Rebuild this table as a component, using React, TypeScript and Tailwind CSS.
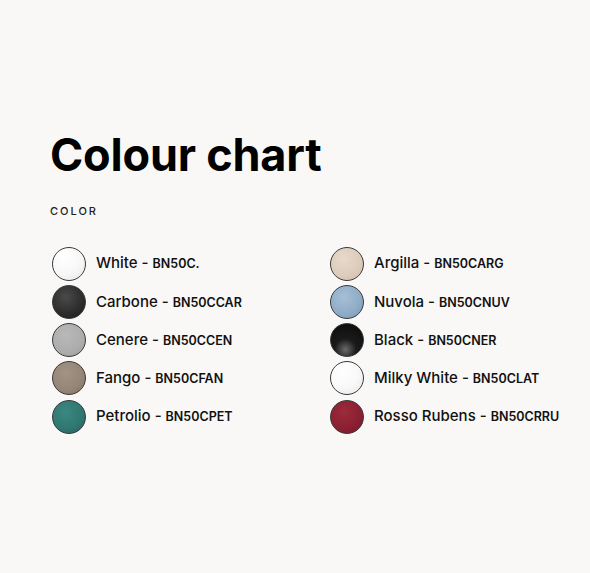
const left = [
  { name: 'White', code: 'BN50C.', fill: 'radial-gradient(circle at 35% 30%, #ffffff 0%, #f7f7f7 55%, #e6e6e6 100%)' },
  { name: 'Carbone', code: 'BN50CCAR', fill: 'radial-gradient(circle at 40% 35%, #4a4a4a 0%, #2e2e2e 55%, #1a1a1a 100%)' },
  { name: 'Cenere', code: 'BN50CCEN', fill: 'radial-gradient(circle at 40% 35%, #b9b9b9 0%, #acacac 60%, #9a9a9a 100%)' },
  { name: 'Fango', code: 'BN50CFAN', fill: 'radial-gradient(circle at 40% 35%, #a39384 0%, #958576 60%, #807061 100%)' },
  { name: 'Petrolio', code: 'BN50CPET', fill: 'radial-gradient(circle at 40% 35%, #3b8882 0%, #2f7670 60%, #225e59 100%)' },
];

const right = [
  { name: 'Argilla', code: 'BN50CARG', fill: 'radial-gradient(circle at 40% 35%, #e8d9cb 0%, #dccbbb 60%, #cdbba9 100%)' },
  { name: 'Nuvola', code: 'BN50CNUV', fill: 'radial-gradient(circle at 40% 35%, #a6bfd6 0%, #8eabc6 60%, #7394b3 100%)' },
  { name: 'Black', code: 'BN50CNER', fill: 'radial-gradient(circle at 45% 80%, #6a6a6a 0%, #1a1a1a 35%, #0a0a0a 100%)' },
  { name: 'Milky White', code: 'BN50CLAT', fill: 'radial-gradient(circle at 35% 30%, #ffffff 0%, #f8f8f8 55%, #e4e4e4 100%)' },
  { name: 'Rosso Rubens', code: 'BN50CRRU', fill: 'radial-gradient(circle at 40% 35%, #9c2a3c 0%, #8a1f31 60%, #731728 100%)' },
];

type Swatch = { name: string; code: string; fill: string };

function Row({ s }: { s: Swatch }) {
  return (
    <li className="flex h-[34px] items-center gap-[10px]">
      <span
        className="h-[34px] w-[34px] shrink-0 rounded-full border border-[#3a3a3a]"
        style={{ background: s.fill }}
      />
      <span className="whitespace-nowrap text-[15px] font-medium text-[#111]">
        {s.name} - <span className="text-[12.5px] font-semibold">{s.code}</span>
      </span>
    </li>
  );
}

export default function App() {
  return (
    <div
      className="h-[573px] w-[590px] bg-[#f9f8f6] pl-[50px] pt-[128px]"
      style={{ fontFamily: 'Inter, "Noto Sans", sans-serif' }}
    >
      <h1 className="text-[45px] font-bold leading-[54px] tracking-[-0.2px] text-black">Colour chart</h1>
      <p className="mt-[21px] text-[11px] font-medium tracking-[2px] text-[#222]">COLOR</p>
      <div className="mt-[27px] flex pl-[2px]">
        <ul className="flex w-[278px] flex-col gap-[4.3px]">
          {left.map((s) => (
            <Row key={s.name} s={s} />
          ))}
        </ul>
        <ul className="flex flex-col gap-[4.3px]">
          {right.map((s) => (
            <Row key={s.name} s={s} />
          ))}
        </ul>
      </div>
    </div>
  );
}
